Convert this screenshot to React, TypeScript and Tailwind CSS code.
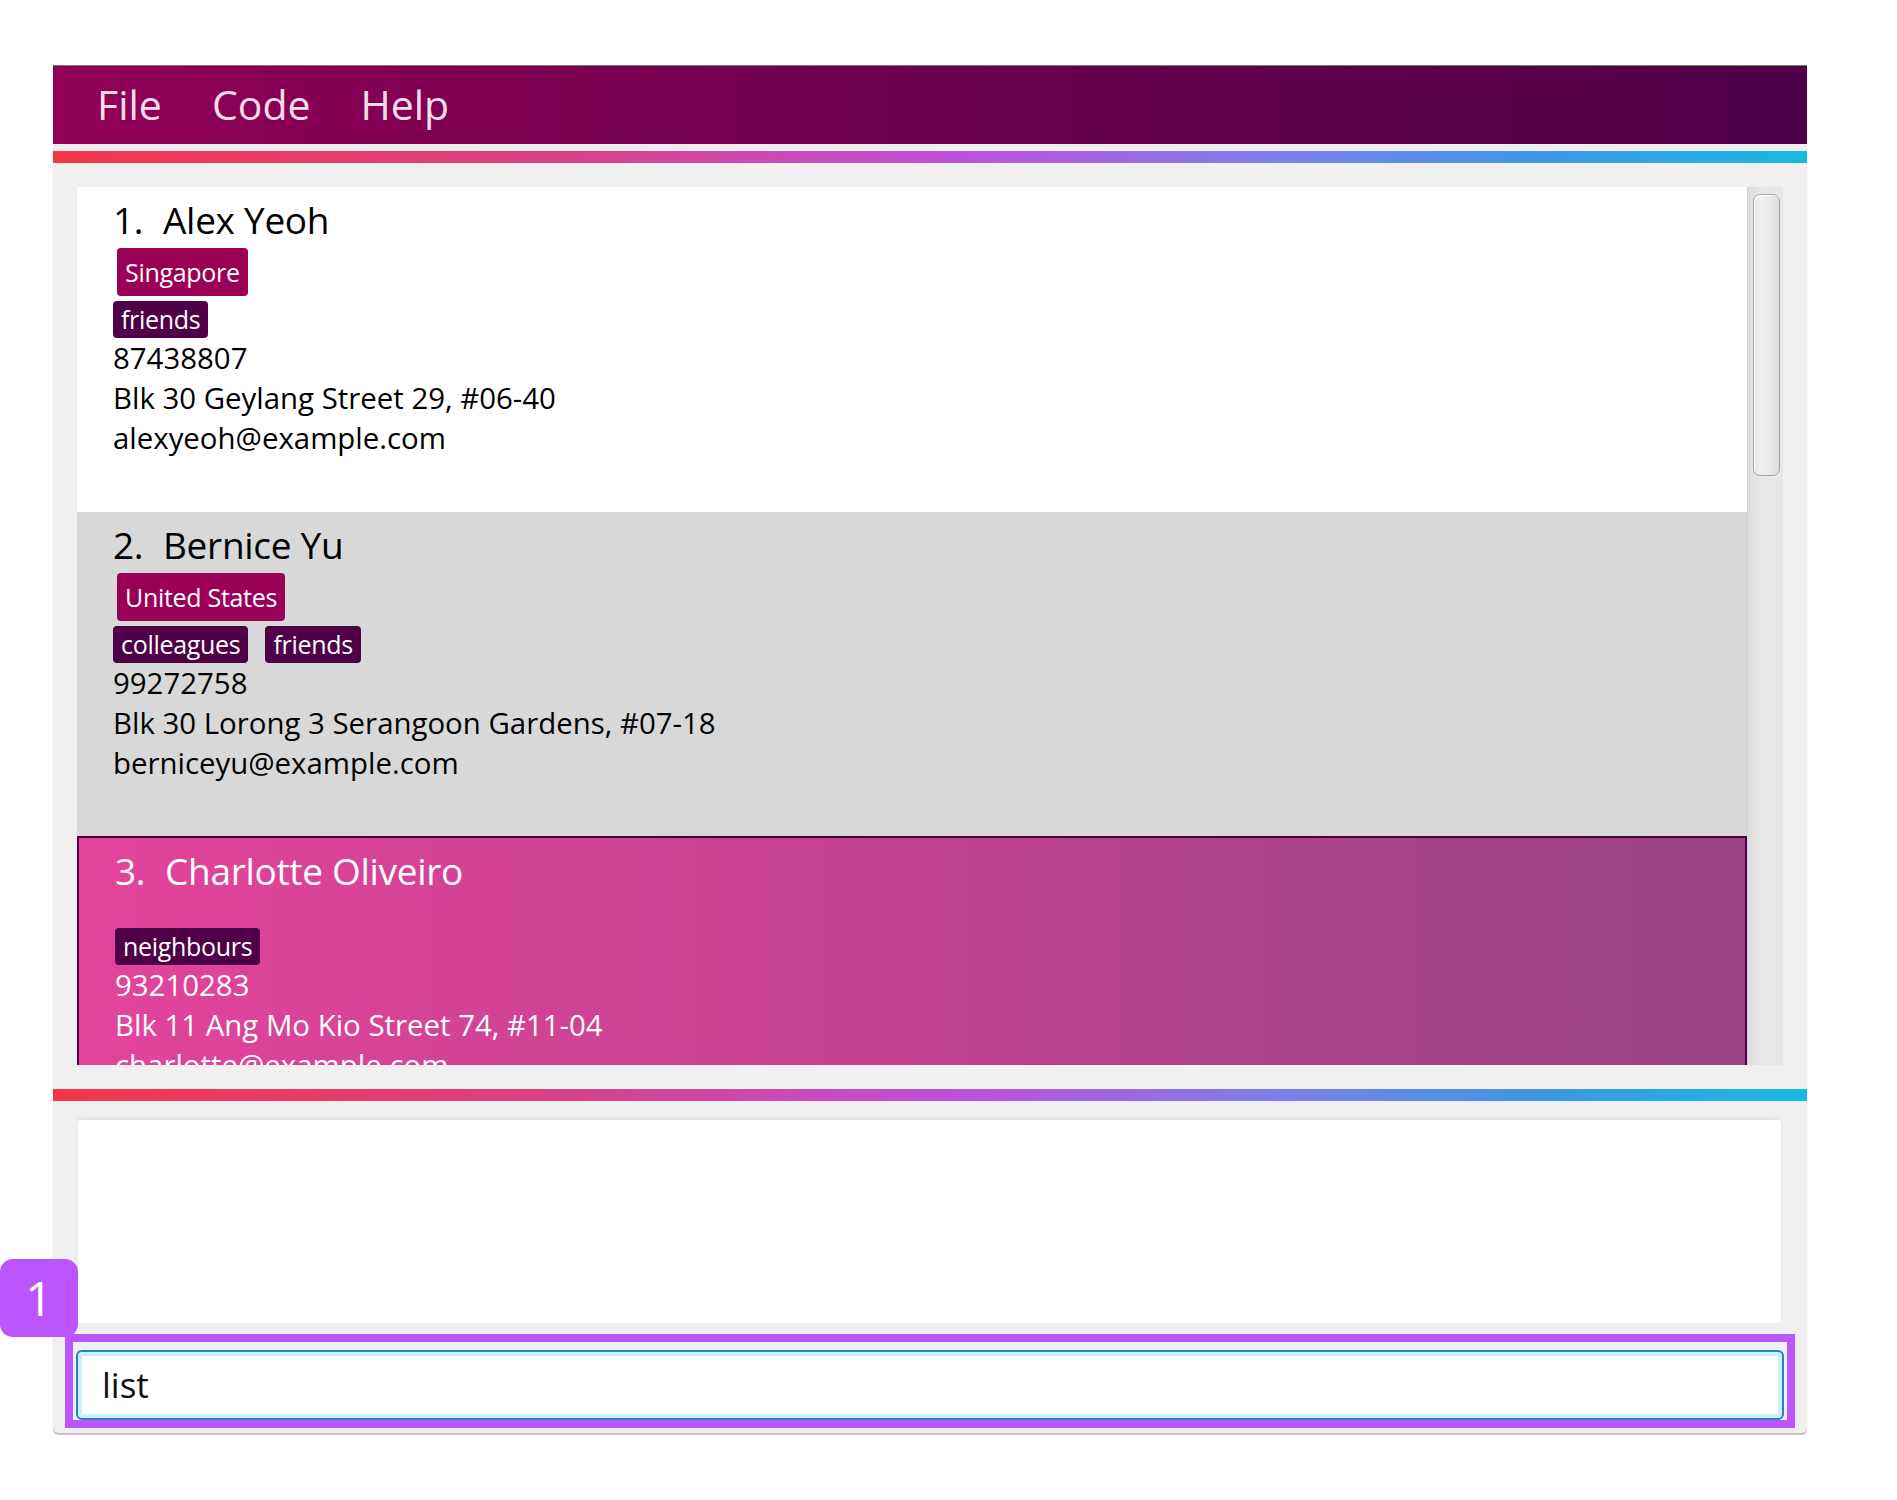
import React from "react";

type Person = {
  name: string;
  country?: string;
  tags: string[];
  phone: string;
  address: string;
  email: string;
};

const people: Person[] = [
  {
    name: "Alex Yeoh",
    country: "Singapore",
    tags: ["friends"],
    phone: "87438807",
    address: "Blk 30 Geylang Street 29, #06-40",
    email: "alexyeoh@example.com",
  },
  {
    name: "Bernice Yu",
    country: "United States",
    tags: ["colleagues", "friends"],
    phone: "99272758",
    address: "Blk 30 Lorong 3 Serangoon Gardens, #07-18",
    email: "berniceyu@example.com",
  },
  {
    name: "Charlotte Oliveiro",
    tags: ["neighbours"],
    phone: "93210283",
    address: "Blk 11 Ang Mo Kio Street 74, #11-04",
    email: "charlotte@example.com",
  },
];

const cardStyles = [
  "h-[325px] bg-white text-black",
  "h-[324px] bg-[#d9d8d9] text-black",
  "h-[330px] border-2 border-[#4c0047] bg-[linear-gradient(to_right,#e3449b_0%,#c94192_40%,#a8438b_75%,#9c4288_100%)] text-white",
];

function PersonCard({ person, index }: { person: Person; index: number }) {
  return (
    <div className={`shrink-0 pl-[36px] pt-[9px] ${cardStyles[index]}`}>
      {/* Name */}
      <div className="flex h-[47px] text-[37px] leading-[48px] tracking-[-0.3px] whitespace-nowrap">
        <span className="w-[50px]">{index + 1}.</span>
        <span>{person.name}</span>
      </div>

      {/* Country */}
      {person.country ? (
        <div className="mt-[5px] flex h-[48px]">
          <span className="ml-[4px] rounded-[4px] bg-[#9b0057] px-[8px] py-[4px] text-[25px] leading-[40px] tracking-[-0.3px] text-white">
            {person.country}
          </span>
        </div>
      ) : (
        <div className="mt-[5px] h-[24px]" />
      )}

      {/* Tags */}
      <div className="mt-[5px] flex h-[37px] gap-[17px]">
        {person.tags.map((t) => (
          <span
            key={t}
            className="rounded-[4px] bg-[#4f0047] px-[8px] text-[25px] leading-[37px] tracking-[-0.3px] text-white"
          >
            {t}
          </span>
        ))}
      </div>

      <div className="text-[29.4px] leading-[40px] whitespace-nowrap">
        <div>{person.phone}</div>
        <div>{person.address}</div>
        <div>{person.email}</div>
      </div>
    </div>
  );
}

function GradientBar() {
  return (
    <div className="h-[12px] bg-[linear-gradient(to_right,#f2364a_0%,#d9438a_30%,#bd51dc_52%,#7c7fe8_70%,#3d97e4_85%,#18b9e0_100%)]" />
  );
}

export default function App() {
  return (
    <div className="relative min-h-[1500px] bg-white pl-[53px] pt-[65px] font-['Open_Sans','Noto_Sans',sans-serif]">
      <div className="flex w-[1754px] flex-col rounded-b-[6px] bg-[#f0f0f0] pb-[13px] shadow-[0_2px_1px_rgba(0,0,0,0.25)]">
        {/* Menu bar */}
        <div className="flex h-[79px] items-center gap-[50px] border-t border-[#7d7d7d] bg-[linear-gradient(to_right,#920058,#6e004f_45%,#4e0048)] pl-[44px] text-[41px] text-[#f4dbea]">
          <span>File</span>
          <span>Code</span>
          <span>Help</span>
        </div>
        <div className="h-[7px] bg-[#ededed]" />
        <GradientBar />

        {/* Person list */}
        <div className="px-[24px] py-[24px]">
          <div className="flex h-[878px]">
            <div className="flex flex-1 flex-col overflow-hidden">
              {people.map((p, i) => (
                <PersonCard key={p.name} person={p} index={i} />
              ))}
            </div>
            <div className="w-[36px] border-l border-[#d2d2d2] bg-[linear-gradient(to_right,#dcdcdc,#e8e8e8_40%,#e6e6e6)]">
              <div className="ml-[5px] mt-[7px] h-[282px] w-[27px] rounded-[7px] border border-[#a4a4a4] bg-[linear-gradient(to_right,#e6e6e6,#f0f0f0_30%,#dedede)] shadow-[inset_1px_1px_0_#ffffff]" />
            </div>
          </div>
        </div>

        <GradientBar />

        {/* Result display */}
        <div className="pl-[25px] pr-[26px] pt-[19px]">
          <div className="h-[203px] rounded-[3px] bg-white shadow-[0_-2px_5px_rgba(0,0,0,0.07)]" />
        </div>

        {/* Command box */}
        <div className="px-[23px] pt-[27px]">
          <div className="flex h-[70px] items-center rounded-[6px] border-2 border-[#1786c8] bg-white pl-[24px] text-[35px] text-[#111] shadow-[inset_0_0_0_4px_#d3ecf6]">
            list
          </div>
        </div>
      </div>

      {/* Annotation overlay */}
      <div className="absolute left-[65px] top-[1334px] h-[94px] w-[1730px] border-[8px] border-[#bb55fe]" />
      <div className="absolute left-0 top-[1259px] flex h-[78px] w-[78px] items-center justify-center rounded-[13px] bg-[#bb55fe] text-[48px] text-white">
        1
      </div>
    </div>
  );
}
